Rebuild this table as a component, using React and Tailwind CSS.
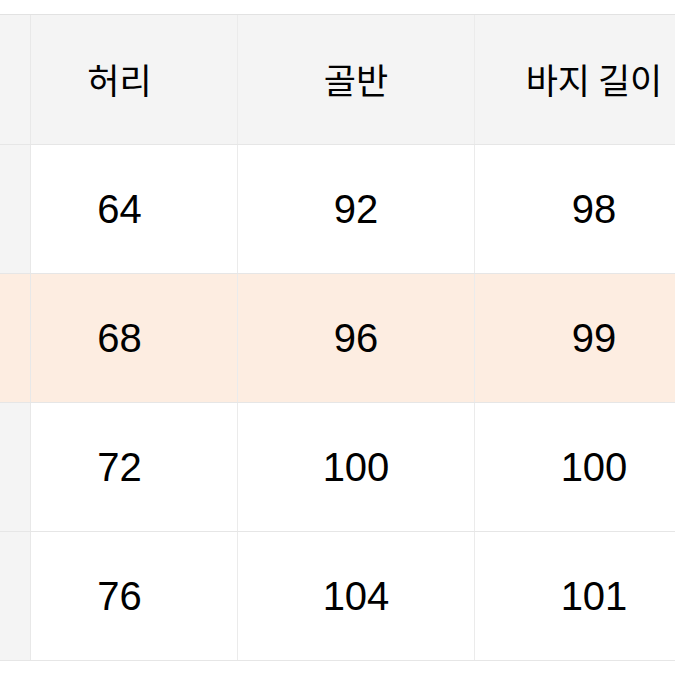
const header = ['허리', '골반', '바지 길이'];

const rows = [
  { values: ['64', '92', '98'] },
  { values: ['68', '96', '99'], highlight: true },
  { values: ['72', '100', '100'] },
  { values: ['76', '104', '101'] },
];

const Row = ({ cells, className, textClass }) => (
  <div className={`grid grid-cols-[31px_207px_237px_238px] border-b border-[#e6e6e6] ${className}`}>
    <div className="border-r border-[#e8e8e8]" />
    <div className={`flex items-center justify-center pr-[29px] border-r border-[#ebebeb] ${textClass}`}>
      {cells[0]}
    </div>
    <div className={`flex items-center justify-center border-r border-[#ebebeb] ${textClass}`}>
      {cells[1]}
    </div>
    <div className={`flex items-center justify-center ${textClass}`}>
      {cells[2]}
    </div>
  </div>
);

export default function App() {
  return (
    <div className="w-[675px] h-[675px] overflow-hidden bg-white pt-[14px]">
      <div className="w-[713px] border-t border-[#e2e2e2]">
        <Row
          cells={header}
          className="h-[130px] bg-[#f4f4f4]"
          textClass="text-[35px] font-normal text-black font-['Noto_Sans_CJK_KR','Noto_Sans',sans-serif]"
        />
        {rows.map((row, idx) => (
          <Row
            key={idx}
            cells={row.values}
            className={
              row.highlight
                ? 'h-[129px] bg-[#fdede1]'
                : 'h-[129px] bg-white [&>div:first-child]:bg-[#f4f4f4]'
            }
            textClass="text-[40px] text-black font-['Liberation_Sans',Arial,sans-serif]"
          />
        ))}
      </div>
    </div>
  );
}
